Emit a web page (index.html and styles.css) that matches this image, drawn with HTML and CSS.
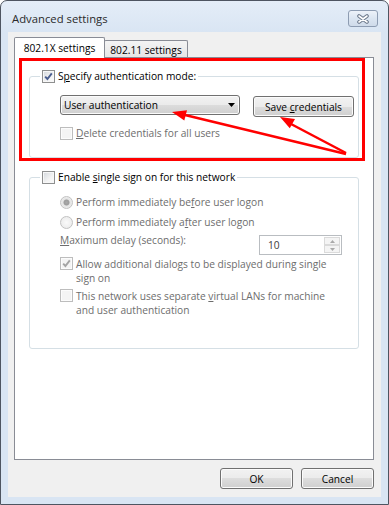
FILE: index.html
```html
<!DOCTYPE html>
<html lang="en">
<head>
  <meta charset="UTF-8">
  <title>Advanced settings</title>
  <link rel="stylesheet" href="styles.css">
</head>
<body>

<div class="window">
  <div class="titlebar">
    <span class="title">Advanced settings</span>
    <span class="close">
      <svg width="14" height="10" viewBox="0 0 14 10">
        <path d="M3 2 L11 8 M11 2 L3 8" stroke="#6a778a" stroke-width="3.6" stroke-linecap="round"/>
        <path d="M3 2 L11 8 M11 2 L3 8" stroke="#fff" stroke-width="1.6" stroke-linecap="round"/>
      </svg>
    </span>
  </div>

  <div class="client">
    <div class="tabs">
      <div class="tab active">802.1X settings</div>
      <div class="tab">802.11 settings</div>
    </div>

    <div class="panel">
      <fieldset class="group group-auth">
        <legend>
          <label class="check">
            <span class="box"><svg width="11" height="11" viewBox="0 0 11 11"><path d="M2.2 5.6 L4.4 8 L8.8 2.4" fill="none" stroke="#4b5e8f" stroke-width="1.9"/></svg></span>
            <span>S<u>p</u>ecify authentication mode:</span>
          </label>
        </legend>
        <div class="auth-row">
          <div class="select">
            <span>User authentication</span>
            <svg width="7" height="4" viewBox="0 0 7 4"><path d="M0 0 H7 L3.5 4 Z" fill="#000"/></svg>
          </div>
          <button class="btn btn-save">Save <u>c</u>redentials</button>
        </div>
        <label class="check disabled item-delete">
          <span class="box"></span>
          <span><u>D</u>elete credentials for all users</span>
        </label>
      </fieldset>

      <fieldset class="group group-sso">
        <legend>
          <label class="check">
            <span class="box"></span>
            <span>Enable <u>s</u>ingle sign on for this network</span>
          </label>
        </legend>
        <label class="check disabled item-before">
          <span class="radio on"></span>
          <span>Perform immediately be<u>f</u>ore user logon</span>
        </label>
        <label class="check disabled item-after">
          <span class="radio"></span>
          <span>Perform immediately a<u>f</u>ter user logon</span>
        </label>
        <div class="delay-row">
          <span class="delay-label"><u>M</u>aximum delay (seconds):</span>
          <div class="spin">
            <span class="spin-value">10</span>
            <span class="spin-btns">
              <span class="spin-btn"><svg width="5" height="3" viewBox="0 0 5 3"><path d="M0 3 L2.5 0 L5 3 Z" fill="#a9a9a9"/></svg></span>
              <span class="spin-btn"><svg width="5" height="3" viewBox="0 0 5 3"><path d="M0 0 H5 L2.5 3 Z" fill="#a9a9a9"/></svg></span>
            </span>
          </div>
        </div>
        <label class="check disabled multi item-allow">
          <span class="box"><svg width="11" height="11" viewBox="0 0 11 11"><path d="M2.2 5.6 L4.4 8 L8.8 2.4" fill="none" stroke="#a4a4a4" stroke-width="1.9"/></svg></span>
          <span>Allow additional dialogs to be displayed during single<br>sign on</span>
        </label>
        <label class="check disabled multi item-vlan">
          <span class="box"></span>
          <span>This network uses separate <u>v</u>irtual LANs for machine<br>and user authentication</span>
        </label>
      </fieldset>

      <div class="highlight"></div>
    </div>

    <div class="actions">
      <button class="btn">OK</button>
      <button class="btn">Cancel</button>
    </div>
  </div>

  <svg class="arrows" width="389" height="505" viewBox="0 0 389 505">
    <path d="M346 154 L185 115" stroke="#f00" stroke-width="2.5"/>
    <polygon points="172,112 187,110.2 184.3,120.4" fill="#f00"/>
    <path d="M346 153 L291 124" stroke="#f00" stroke-width="2.5"/>
    <polygon points="280,117 295,119 289.8,128.3" fill="#f00"/>
  </svg>
</div>

</body>
</html>
```

FILE: styles.css
```css
body {
  margin: 0;
  background: #fff;
  font-family: 'Open Sans', 'Noto Sans', sans-serif;
  font-size: 10.2px;
  color: #000;
}
u {
  text-underline-offset: 1px;
}
.window {
  position: relative;
  width: 389px;
  height: 505px;
  box-sizing: border-box;
  border: 1px solid #4e5561;
  border-radius: 7px 7px 0 0;
  background: linear-gradient(#e4edf8, #d9e5f3 32px, #d9e5f3);
  padding: 0 7px 7px 7px;
  display: flex;
  flex-direction: column;
}
.titlebar {
  height: 31px;
  display: flex;
  align-items: flex-start;
}
.title {
  margin-top: 10px;
  padding-left: 4px;
  line-height: 16px;
  font-size: 11.3px;
  color: #2a2a2a;
}
.close {
  margin-left: auto;
  margin-top: 9px;
  margin-right: 3px;
  width: 30px;
  height: 17px;
  box-sizing: border-box;
  border: 1px solid #8d9cb2;
  border-radius: 3px;
  background: linear-gradient(#edf2f9, #dbe5f1 50%, #cfdbea);
  display: flex;
  align-items: center;
  justify-content: center;
}
.client {
  height: 465px;
  box-sizing: border-box;
  background: #f0f0f0;
  padding: 5px 7px 8px 6px;
  display: flex;
  flex-direction: column;
}
.tabs {
  display: flex;
  align-items: flex-end;
}
.tab {
  box-sizing: border-box;
  border: 1px solid #898c95;
  border-bottom: none;
  border-radius: 2px 2px 0 0;
  display: flex;
  align-items: center;
  justify-content: center;
  width: 84px;
  height: 17px;
  margin-left: -1px;
  padding-top: 2px;
  background: linear-gradient(#f4f4f4, #e6e6e6);
}
.tab.active {
  position: relative;
  z-index: 1;
  width: 91px;
  height: 21px;
  margin-left: 0;
  margin-bottom: -1px;
  padding-top: 0;
  background: #fff;
}
.panel {
  position: relative;
  height: 403px;
  box-sizing: border-box;
  border: 1px solid #898c95;
  background: #fff;
  padding: 11px 14px 0 14px;
}
.group {
  margin: 0;
  border: 1px solid #d5dfe5;
  border-radius: 3px;
  padding: 11px 3px 16px 10px;
}
.group legend {
  padding: 0 2px;
  line-height: 15px;
}
.group-sso {
  margin-top: 12px;
  padding: 10px 3px 31px 10px;
}
.check {
  display: flex;
  align-items: flex-start;
  gap: 3px;
  line-height: 15px;
}
.group > .check,
.auth-row,
.delay-row {
  margin-left: 20px;
}
.check.disabled {
  color: #6d6d6d;
}
.check.multi {
  line-height: 14px;
}
.box {
  flex: none;
  width: 13px;
  height: 13px;
  margin-top: 1px;
  box-sizing: border-box;
  border: 1px solid #8e8f8f;
  background: linear-gradient(135deg, #d3d7dc, #f3f3f3 60%, #fbfbfb);
  box-shadow: inset 0 0 0 1px #f7f7f7;
  display: flex;
  align-items: center;
  justify-content: center;
}
.check.multi .box {
  margin-top: 0;
}
.disabled .box {
  border-color: #bdbdbd;
  background: #f4f4f4;
  box-shadow: inset 0 0 0 1px #fcfcfc;
}
.radio {
  flex: none;
  width: 13px;
  height: 13px;
  margin-top: 1px;
  box-sizing: border-box;
  border: 1px solid #c2c2c2;
  border-radius: 50%;
  background: radial-gradient(circle, #fafafa, #e8e8e8);
}
.radio.on {
  background: radial-gradient(circle, #a9a9a9 0, #9c9c9c 2.6px, #e3e3e3 3.4px, #f5f5f5 100%);
}
.auth-row {
  display: flex;
  align-items: flex-start;
  gap: 13px;
  height: 22px;
}
.btn {
  box-sizing: border-box;
  border: 1px solid #707070;
  border-radius: 3px;
  background: linear-gradient(#f2f2f2, #ebebeb 50%, #dddddd 50%, #cfcfcf);
  box-shadow: inset 0 0 0 1px #fbfbfb;
  font: inherit;
  color: #000;
  padding: 0;
  width: 73px;
  height: 21px;
}
.select {
  width: 180px;
  height: 20px;
  box-sizing: border-box;
  border: 1px solid #707070;
  border-radius: 3px;
  background: linear-gradient(#f2f2f2, #ebebeb 50%, #dddddd 50%, #cfcfcf);
  box-shadow: inset 0 0 0 1px #fbfbfb;
  display: flex;
  align-items: center;
  justify-content: space-between;
  padding: 0 4px 0 3px;
}
.btn-save {
  width: 101px;
  margin-top: 1px;
}
.item-delete {
  margin-top: 9px;
}
.item-after {
  margin-top: 5px;
}
.delay-row {
  margin-top: 5px;
  display: flex;
  align-items: flex-start;
  justify-content: space-between;
  padding-right: 13px;
  color: #6d6d6d;
}
.delay-label {
  line-height: 15px;
  margin-top: -2px;
}
.spin {
  width: 83px;
  height: 20px;
  box-sizing: border-box;
  border: 1px solid #b9bdc1;
  background: #fff;
  display: flex;
  align-items: center;
  padding: 1px 1px 1px 8px;
  color: #3c3c3c;
}
.spin-value {
  flex: 1;
}
.spin-btns {
  width: 16px;
  height: 100%;
  display: flex;
  flex-direction: column;
}
.spin-btn {
  flex: 1;
  box-sizing: border-box;
  border: 1px solid #dadada;
  background: #f4f4f4;
  display: flex;
  align-items: center;
  justify-content: center;
}
.item-allow {
  margin-top: 2px;
}
.item-vlan {
  margin-top: 4px;
}
.highlight {
  position: absolute;
  left: 4px;
  top: 0;
  width: 346px;
  height: 103px;
  box-sizing: border-box;
  border: 3px solid #f00;
}
.actions {
  margin-top: 8px;
  display: flex;
  justify-content: flex-end;
  gap: 8px;
}
.arrows {
  position: absolute;
  left: -1px;
  top: -1px;
  pointer-events: none;
}
```
